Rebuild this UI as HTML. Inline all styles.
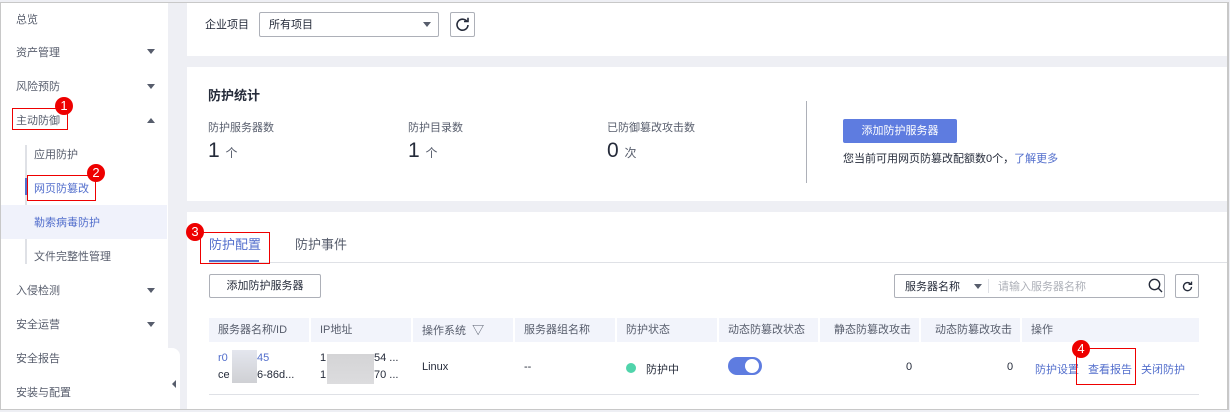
<!DOCTYPE html><html><head><meta charset="utf-8"><style>
*{margin:0;padding:0;box-sizing:border-box}
body{width:1230px;height:412px;overflow:hidden;background:#eeeff4;font-family:"Liberation Sans","Noto Sans CJK SC",sans-serif;font-size:11px;color:#252b3a;position:relative}
.a{position:absolute;white-space:nowrap}
.frame{position:absolute;left:0;top:2px;width:1229px;height:408px;border:1px solid #c8c8c8;border-right:2px solid #c8c8c8}
.side{position:absolute;left:1px;top:3px;width:167px;height:406px;background:#fff}
.panel{position:absolute;left:187px;width:1041px;background:#fff}
.tri{position:absolute;width:0;height:0;border-left:4px solid transparent;border-right:4px solid transparent;border-top:5px solid #575d6c}
.badge{position:absolute;width:18px;height:18px;border-radius:50%;background:#e00;color:#fff;font-size:13px;text-align:center;line-height:18px}
.rb{position:absolute;border:1px solid #e00}
.th{position:absolute;top:318px;height:24px;line-height:24px;background:#f2f4fb;color:#575d6c;padding-left:9px;white-space:nowrap}
.lk{color:#526ecc}
</style></head><body>
<div class="side"></div>
<div class="a" style="left:16px;top:11px;color:#575d6c">总览</div>
<div class="a" style="left:16px;top:44px;color:#575d6c">资产管理</div><div class="tri" style="left:147px;top:49px"></div>
<div class="a" style="left:16px;top:78px;color:#575d6c">风险预防</div><div class="tri" style="left:147px;top:84px"></div>
<div class="a" style="left:16px;top:112px;color:#575d6c">主动防御</div><div class="tri" style="left:147px;top:118px;border-top:0;border-bottom:5px solid #575d6c"></div>
<div style="position:absolute;left:25px;top:145px;width:2px;height:119px;background:#dfe1e6"></div>
<div style="position:absolute;left:25px;top:178px;width:2px;height:17px;background:#526ecc"></div>
<div style="position:absolute;left:1px;top:205px;width:166px;height:34px;background:#f0f2fb"></div>
<div class="a" style="left:34px;top:146px;color:#575d6c">应用防护</div>
<div class="a" style="left:34px;top:180px;color:#526ecc">网页防篡改</div>
<div class="a" style="left:34px;top:214px;color:#526ecc">勒索病毒防护</div>
<div class="a" style="left:34px;top:248px;color:#575d6c">文件完整性管理</div>
<div class="a" style="left:16px;top:282px;color:#575d6c">入侵检测</div><div class="tri" style="left:147px;top:288px"></div>
<div class="a" style="left:16px;top:316px;color:#575d6c">安全运营</div><div class="tri" style="left:147px;top:322px"></div>
<div class="a" style="left:16px;top:350px;color:#575d6c">安全报告</div>
<div class="a" style="left:16px;top:384px;color:#575d6c">安装与配置</div>
<div style="position:absolute;left:168px;top:348px;width:12px;height:62px;background:#fff;border-radius:0 8px 0 0"></div>
<div style="position:absolute;left:172px;top:380px;border-top:4px solid transparent;border-bottom:4px solid transparent;border-right:4px solid #575d6c"></div>

<div class="panel" style="top:3px;height:53px"></div>
<div class="a" style="left:205px;top:16px">企业项目</div>
<div style="position:absolute;left:259px;top:12px;width:180px;height:25px;border:1px solid #adb0b8;border-radius:2px"></div>
<div class="a" style="left:269px;top:16px">所有项目</div><div class="tri" style="left:423px;top:22px"></div>
<div style="position:absolute;left:450px;top:12px;width:25px;height:25px;border:1px solid #adb0b8;border-radius:2px"></div>
<svg class="a" style="left:455px;top:17px" width="15" height="15" viewBox="0 0 15 15"><path d="M12 4.5A5.5 5.5 0 1 0 13 8" fill="none" stroke="#252b3a" stroke-width="1.6"/><path d="M9 4.5h4V0.8" fill="none" stroke="#252b3a" stroke-width="1.6"/></svg>

<div class="panel" style="top:67px;height:134px"></div>
<div class="a" style="left:208px;top:85px;font-size:13px;font-weight:bold">防护统计</div>
<div class="a" style="left:208px;top:119px;color:#575d6c">防护服务器数</div>
<div class="a" style="left:408px;top:119px;color:#575d6c">防护目录数</div>
<div class="a" style="left:607px;top:119px;color:#575d6c">已防御篡改攻击数</div>
<div class="a" style="left:208px;top:139px;font-size:21px">1 <span style="font-size:12px;color:#575d6c">个</span></div>
<div class="a" style="left:408px;top:139px;font-size:21px">1 <span style="font-size:12px;color:#575d6c">个</span></div>
<div class="a" style="left:607px;top:139px;font-size:21px">0 <span style="font-size:12px;color:#575d6c">次</span></div>
<div style="position:absolute;left:806px;top:101px;width:1px;height:82px;background:#adb0b8"></div>
<div class="a" style="left:843px;top:119px;width:114px;height:24px;background:#5e7ce0;border-radius:2px;color:#fff;text-align:center;line-height:24px">添加防护服务器</div>
<div class="a" style="left:843px;top:150px">您当前可用网页防篡改配额数0个，<span class="lk">了解更多</span></div>

<div class="panel" style="top:212px;height:197px"></div>
<div class="a" style="left:209px;top:234px;font-size:13px;color:#526ecc">防护配置</div>
<div class="a" style="left:295px;top:234px;font-size:13px;color:#575d6c">防护事件</div>
<div style="position:absolute;left:209px;top:262px;width:1020px;height:1px;background:#dfe1e6"></div>
<div style="position:absolute;left:209px;top:260px;width:50px;height:2px;background:#526ecc"></div>
<div class="a" style="left:209px;top:274px;width:112px;height:24px;border:1px solid #adb0b8;border-radius:2px;text-align:center;line-height:22px">添加防护服务器</div>
<div style="position:absolute;left:894px;top:274px;width:271px;height:24px;border:1px solid #adb0b8;border-radius:2px"></div>
<div class="a" style="left:905px;top:278px">服务器名称</div><div class="tri" style="left:974px;top:284px"></div>
<div style="position:absolute;left:988px;top:279px;width:1px;height:14px;background:#dfe1e6"></div>
<div class="a" style="left:998px;top:278px;color:#adb0b8">请输入服务器名称</div>
<svg class="a" style="left:1148px;top:278px" width="15" height="15" viewBox="0 0 15 15"><circle cx="6.5" cy="6.5" r="5.2" fill="none" stroke="#252b3a" stroke-width="1.4"/><path d="M10.3 10.3L14 14" stroke="#252b3a" stroke-width="1.4"/></svg>
<div style="position:absolute;left:1175px;top:274px;width:24px;height:24px;border:1px solid #adb0b8;border-radius:2px"></div>
<svg class="a" style="left:1182px;top:281px" width="11" height="11" viewBox="0 0 15 15"><path d="M12 4.5A5.5 5.5 0 1 0 13 8" fill="none" stroke="#252b3a" stroke-width="1.8"/><path d="M9 4.5h4V0.8" fill="none" stroke="#252b3a" stroke-width="1.8"/></svg>

<div class="th" style="left:209px;width:100px">服务器名称/ID</div>
<div class="th" style="left:311px;width:100px">IP地址</div>
<div class="th" style="left:413px;width:100px">操作系统 &nbsp;<span style="font-size:12px">▽</span></div>
<div class="th" style="left:515px;width:100px">服务器组名称</div>
<div class="th" style="left:617px;width:100px">防护状态</div>
<div class="th" style="left:719px;width:99px">动态防篡改状态</div>
<div class="th" style="left:820px;width:99px;text-align:right;padding-right:8px">静态防篡改攻击</div>
<div class="th" style="left:921px;width:99px;text-align:right;padding-right:8px">动态防篡改攻击</div>
<div class="th" style="left:1022px;width:177px">操作</div>
<div style="position:absolute;left:209px;top:394px;width:990px;height:1px;background:#dfe1e6"></div>
<div class="a lk" style="left:218px;top:352px">r0</div><div class="a lk" style="left:257px;top:352px">45</div>
<div class="a" style="left:218px;top:369px">ce</div><div class="a" style="left:257px;top:369px">6-86d...</div>
<div style="position:absolute;left:232px;top:350px;width:25px;height:33px;background:linear-gradient(#e4e6ee,#cfd0d4)"></div>
<div class="a" style="left:320px;top:352px">1</div><div class="a" style="left:374px;top:352px">54 ...</div>
<div class="a" style="left:320px;top:369px">1</div><div class="a" style="left:374px;top:369px">70 ...</div>
<div style="position:absolute;left:327px;top:354px;width:47px;height:30px;background:linear-gradient(#d4d4d6,#dcdcde)"></div>
<div class="a" style="left:422px;top:361px">Linux</div>
<div class="a" style="left:524px;top:361px">--</div>
<div style="position:absolute;left:626px;top:363px;width:10px;height:10px;border-radius:50%;background:#50d4ab"></div>
<div class="a" style="left:646px;top:361px">防护中</div>
<div style="position:absolute;left:728px;top:357px;width:34px;height:18px;border-radius:9px;background:#5e7ce0"></div>
<div style="position:absolute;left:745px;top:359px;width:14px;height:14px;border-radius:50%;background:#fff"></div>
<div class="a" style="left:906px;top:361px">0</div>
<div class="a" style="left:1007px;top:361px">0</div>
<div class="a lk" style="left:1035px;top:361px">防护设置</div>
<div class="a lk" style="left:1088px;top:361px">查看报告</div>
<div class="a lk" style="left:1141px;top:361px">关闭防护</div>

<div class="rb" style="left:12px;top:108px;width:56px;height:22px"></div><div class="badge" style="left:55px;top:97px">1</div>
<div class="rb" style="left:27px;top:175px;width:69px;height:26px"></div><div class="badge" style="left:87px;top:164px">2</div>
<div class="rb" style="left:200px;top:232px;width:70px;height:32px"></div><div class="badge" style="left:186px;top:223px">3</div>
<div class="rb" style="left:1076px;top:348px;width:60px;height:37px"></div><div class="badge" style="left:1072px;top:340px">4</div>
<div class="frame"></div>
</body></html>
